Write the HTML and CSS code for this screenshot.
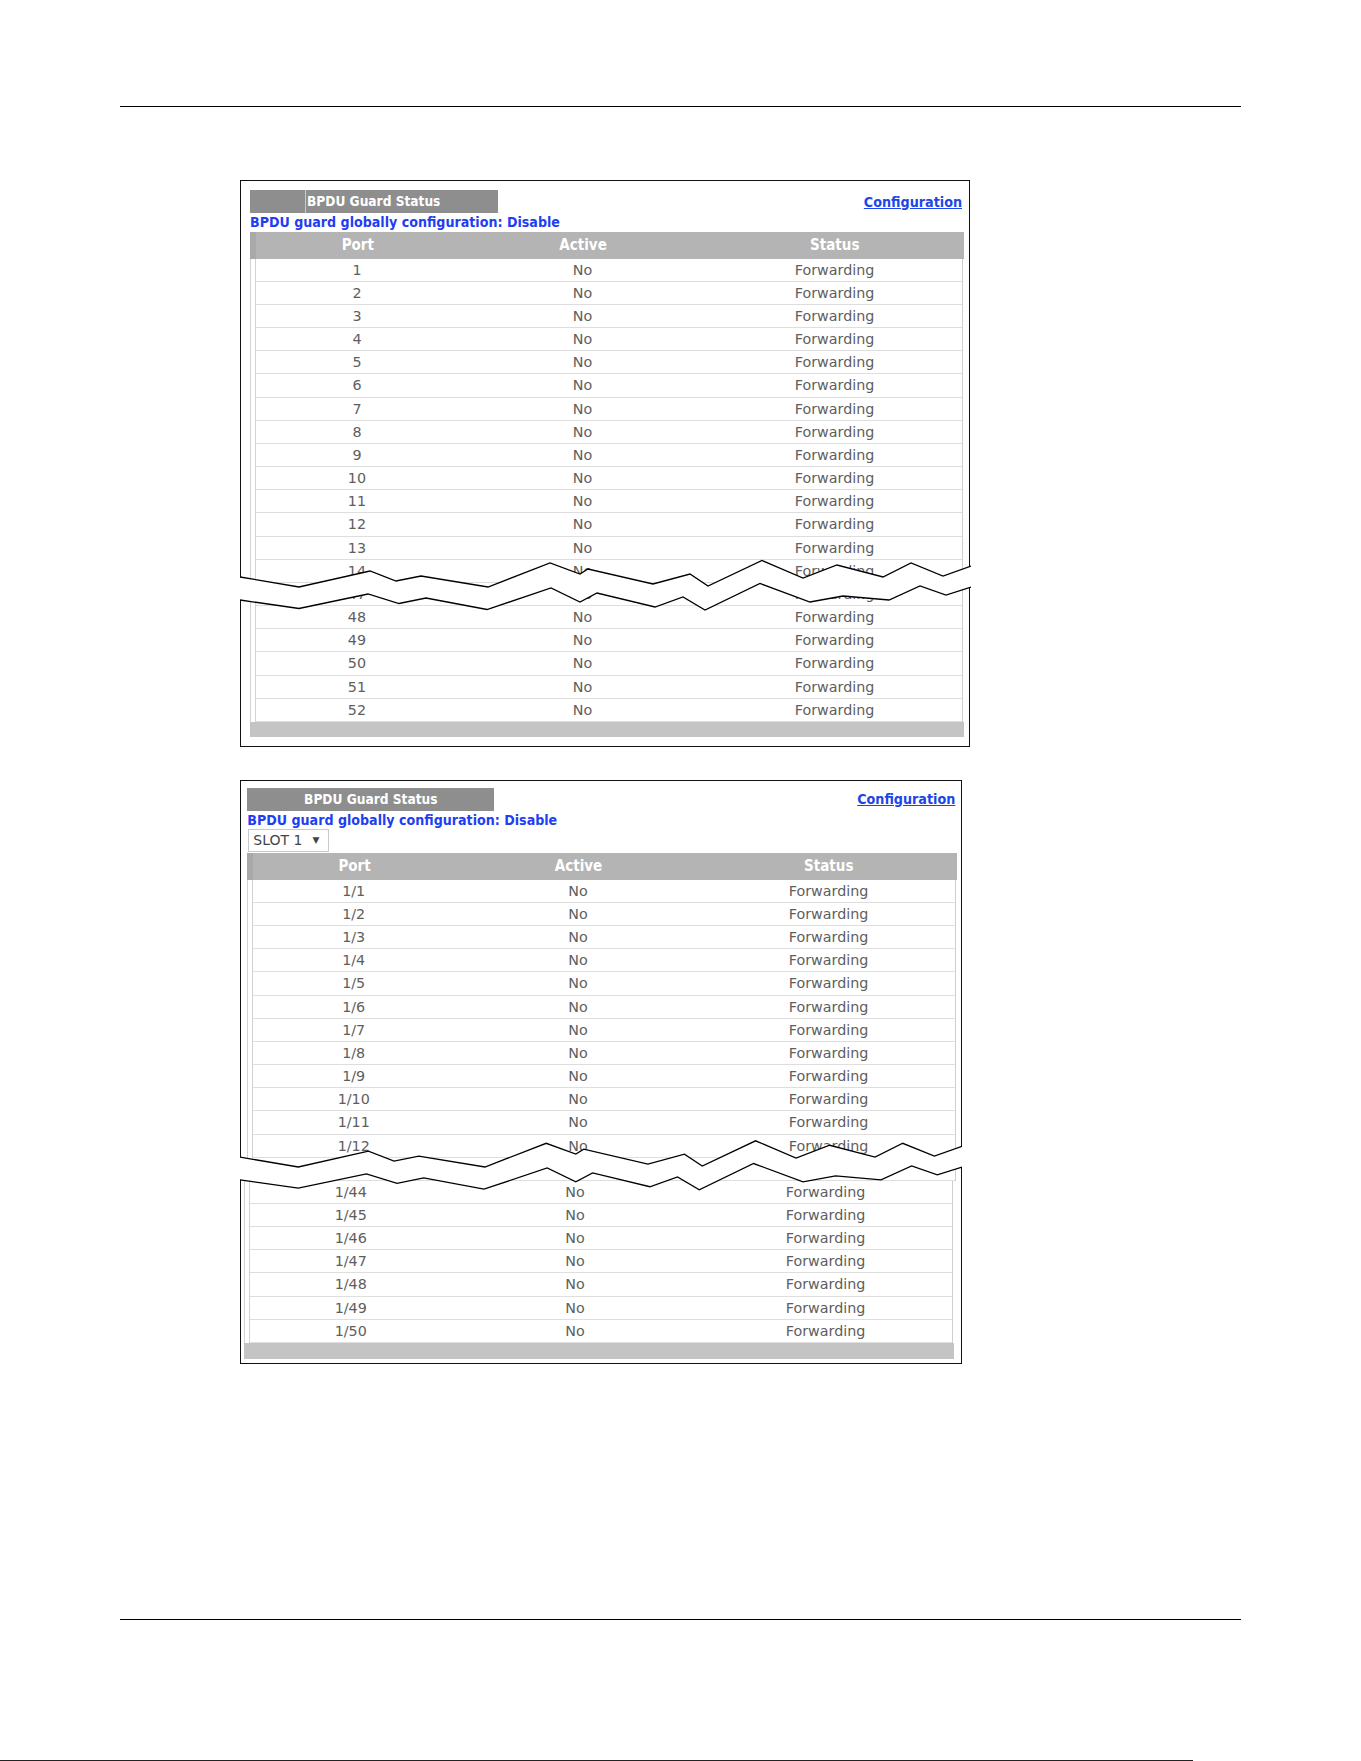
FILE: index.html
```html
<!DOCTYPE html>
<html lang="en">
<head>
    <meta charset="UTF-8">
    <title>BPDU Guard Status</title>
    <link rel="stylesheet" href="styles.css">
</head>
<body>
<div class="page">
    <div class="rule"></div>

    <div class="panel panel-a">
        <div class="panel-head">
            <div class="title split"><span class="title-gap"></span><span class="title-text">BPDU Guard Status</span></div>
            <a class="config-link" href="#">Configuration</a>
        </div>
        <div class="global">BPDU guard globally configuration: Disable</div>
        <div class="grid-head"><span>Port</span><span>Active</span><span>Status</span></div>
        <div class="grid-body">
            <div class="rows">
                <div class="row"><span>1</span><span>No</span><span>Forwarding</span></div>
                <div class="row"><span>2</span><span>No</span><span>Forwarding</span></div>
                <div class="row"><span>3</span><span>No</span><span>Forwarding</span></div>
                <div class="row"><span>4</span><span>No</span><span>Forwarding</span></div>
                <div class="row"><span>5</span><span>No</span><span>Forwarding</span></div>
                <div class="row"><span>6</span><span>No</span><span>Forwarding</span></div>
                <div class="row"><span>7</span><span>No</span><span>Forwarding</span></div>
                <div class="row"><span>8</span><span>No</span><span>Forwarding</span></div>
                <div class="row"><span>9</span><span>No</span><span>Forwarding</span></div>
                <div class="row"><span>10</span><span>No</span><span>Forwarding</span></div>
                <div class="row"><span>11</span><span>No</span><span>Forwarding</span></div>
                <div class="row"><span>12</span><span>No</span><span>Forwarding</span></div>
                <div class="row"><span>13</span><span>No</span><span>Forwarding</span></div>
                <div class="row"><span>14</span><span>No</span><span>Forwarding</span></div>
                <div class="row"><span>47</span><span>No</span><span>Forwarding</span></div>
            </div>
        </div>
        <div class="lower">
            <div class="grid-body">
                <div class="rows">
                    <div class="row"><span>48</span><span>No</span><span>Forwarding</span></div>
                    <div class="row"><span>49</span><span>No</span><span>Forwarding</span></div>
                    <div class="row"><span>50</span><span>No</span><span>Forwarding</span></div>
                    <div class="row"><span>51</span><span>No</span><span>Forwarding</span></div>
                    <div class="row"><span>52</span><span>No</span><span>Forwarding</span></div>
                </div>
            </div>
            <div class="grid-foot"></div>
        </div>

        <svg class="break" width="731" height="62" viewBox="0 0 731 62">
            <polygon fill="#fff" points="0,22 59,32 130,16 156,26 181,21 248,32 310,8 340,19 348,14 413,29 450,19 468,31 522,5.5 563,23 597,10 643,22 671,8 703,21 731,11 731,32 706,40 680,31 649,45 603,41 570,47 520,28.5 465,55 443,42 415,52 357,38 340,47 311,33 247,54.5 186,43 159,48.5 128,39 59,53.5 0,45"/>
            <polyline fill="none" stroke="#000" stroke-width="1.3" points="0,22 59,32 130,16 156,26 181,21 248,32 310,8 340,19 348,14 413,29 450,19 468,31 522,5.5 563,23 597,10 643,22 671,8 703,21 731,11"/>
            <polyline fill="none" stroke="#000" stroke-width="1.3" points="0,45 59,53.5 128,39 159,48.5 186,43 247,54.5 311,33 340,47 357,38 415,52 443,42 465,55 520,28.5 570,47 603,41 649,45 680,31 706,40 731,32"/>
        </svg>
    </div>

    <div class="panel panel-b">
        <div class="panel-head">
            <div class="title">BPDU Guard Status</div>
            <a class="config-link" href="#">Configuration</a>
        </div>
        <div class="global">BPDU guard globally configuration: Disable</div>
        <div class="slot"><span>SLOT 1</span><span class="caret">&#9660;</span></div>
        <div class="grid-head"><span>Port</span><span>Active</span><span>Status</span></div>
        <div class="grid-body">
            <div class="rows">
                <div class="row"><span>1/1</span><span>No</span><span>Forwarding</span></div>
                <div class="row"><span>1/2</span><span>No</span><span>Forwarding</span></div>
                <div class="row"><span>1/3</span><span>No</span><span>Forwarding</span></div>
                <div class="row"><span>1/4</span><span>No</span><span>Forwarding</span></div>
                <div class="row"><span>1/5</span><span>No</span><span>Forwarding</span></div>
                <div class="row"><span>1/6</span><span>No</span><span>Forwarding</span></div>
                <div class="row"><span>1/7</span><span>No</span><span>Forwarding</span></div>
                <div class="row"><span>1/8</span><span>No</span><span>Forwarding</span></div>
                <div class="row"><span>1/9</span><span>No</span><span>Forwarding</span></div>
                <div class="row"><span>1/10</span><span>No</span><span>Forwarding</span></div>
                <div class="row"><span>1/11</span><span>No</span><span>Forwarding</span></div>
                <div class="row"><span>1/12</span><span>No</span><span>Forwarding</span></div>
                <div class="row"><span>1/43</span><span>No</span><span>Forwarding</span></div>
            </div>
        </div>
        <div class="lower nudge">
            <div class="grid-body">
                <div class="rows">
                    <div class="row"><span>1/44</span><span>No</span><span>Forwarding</span></div>
                    <div class="row"><span>1/45</span><span>No</span><span>Forwarding</span></div>
                    <div class="row"><span>1/46</span><span>No</span><span>Forwarding</span></div>
                    <div class="row"><span>1/47</span><span>No</span><span>Forwarding</span></div>
                    <div class="row"><span>1/48</span><span>No</span><span>Forwarding</span></div>
                    <div class="row"><span>1/49</span><span>No</span><span>Forwarding</span></div>
                    <div class="row"><span>1/50</span><span>No</span><span>Forwarding</span></div>
                </div>
            </div>
            <div class="grid-foot"></div>
        </div>

        <svg class="break" width="731" height="62" viewBox="0 0 731 62">
            <polygon fill="#fff" points="0,22 59,32 130,16 156,26 181,21 248,32 310,8 340,19 348,14 413,29 450,19 468,31 522,5.5 563,23 597,10 643,22 671,8 703,21 731,11 731,32 706,40 680,31 649,45 603,41 570,47 520,28.5 465,55 443,42 415,52 357,38 340,47 311,33 247,54.5 186,43 159,48.5 128,39 59,53.5 0,45"/>
            <polyline fill="none" stroke="#000" stroke-width="1.3" points="0,22 59,32 130,16 156,26 181,21 248,32 310,8 340,19 348,14 413,29 450,19 468,31 522,5.5 563,23 597,10 643,22 671,8 703,21 731,11"/>
            <polyline fill="none" stroke="#000" stroke-width="1.3" points="0,45 59,53.5 128,39 159,48.5 186,43 247,54.5 311,33 340,47 357,38 415,52 443,42 465,55 520,28.5 570,47 603,41 649,45 680,31 706,40 731,32"/>
        </svg>
    </div>

    <div class="rule rule-bottom"></div>
    <div class="edge"></div>
</div>
</body>
</html>
```

FILE: styles.css
```css
body{
    margin: 0;
    background: #fff;
    font-family: "DejaVu Sans", sans-serif;
}
.page{
    padding-top: 106px;
}
.rule{
    height: 1px;
    background: #000;
    margin: 0 120px;
}
.rule-bottom{
    margin-top: 255px;
}
.edge{
    margin-top: 140px;
    width: 1193px;
    height: 1px;
    background: #222;
}

.panel{
    position: relative;
    box-sizing: border-box;
    margin-left: 240px;
    border: 1px solid #111;
}
.panel-a{
    width: 730px;
    margin-top: 73px;
    padding: 9px 5px 9px 9px;
}
.panel-b{
    width: 722px;
    margin-top: 33px;
    padding: 7.3px 3.7px 4.3px 6.3px;
}

/* bold labels use the condensed cut, closer to the original widths */
.title, .config-link, .global, .grid-head{
    font-family: "DejaVu Sans Condensed", "DejaVu Sans", sans-serif;
    font-weight: bold;
}

.panel-head{
    display: flex;
    justify-content: space-between;
    align-items: center;
}
.title{
    display: flex;
    justify-content: center;
    width: 247px;
    height: 22.4px;
    line-height: 22.4px;
    background: #8e8e8e;
    color: #fff;
    font-size: 13.6px;
}
.title.split{
    justify-content: flex-start;
    width: 248px;
    height: 23px;
    line-height: 23px;
}
.title-gap{
    width: 55px;
    border-right: 1px solid #c9c9c9;
}
.title-text{
    padding-left: 1px;
}
.config-link{
    color: #1d46e8;
    font-size: 14.2px;
    margin: 0 2px 0 0;
}
.global{
    height: 18.7px;
    line-height: 18.7px;
    color: #1f3ef2;
    font-size: 14.1px;
}
.panel-b .global{
    height: 18px;
    line-height: 18px;
}
.slot{
    box-sizing: border-box;
    width: 81px;
    height: 23px;
    margin: 0 0 1.6px 1px;
    padding-left: 4px;
    display: flex;
    align-items: center;
    gap: 10px;
    border: 1px solid #cacaca;
    color: #444;
    font-size: 14px;
}
.caret{
    font-size: 9px;
}

.grid-head{
    display: grid;
    grid-template-columns: 28.6% 35.3% 36.1%;
    align-items: center;
    height: 27px;
    padding: 0 2px 0 7px;
    background: linear-gradient(to right, #a9a9a9 6px, #b4b4b4 6px);
    color: #fff;
    font-size: 15px;
    text-align: center;
}
.panel-b .grid-head{
    height: 26.7px;
}
.grid-body{
    margin-right: 1px;
    padding-left: 4px;
    border-left: 1px solid #d2d2d2;
}
.rows{
    border-left: 1px solid #d2d2d2;
    border-right: 1px solid #cfcfcf;
}
.row{
    display: grid;
    grid-template-columns: 28.6% 35.3% 36.1%;
    box-sizing: border-box;
    height: 23.16px;
    line-height: 22px;
    border-bottom: 1px solid #dedede;
    color: #5e5e5e;
    font-size: 14.3px;
    text-align: center;
}
.grid-foot{
    height: 15px;
    background: #c4c4c4;
}
.panel-b .grid-foot{
    height: 15.6px;
}
.nudge{
    margin: 0 3px 0 -3px;
}

.break{
    position: absolute;
    left: -1px;
    top: 374px;
}
.panel-b .break{
    top: 354.5px;
    width: 722px;
}
```
